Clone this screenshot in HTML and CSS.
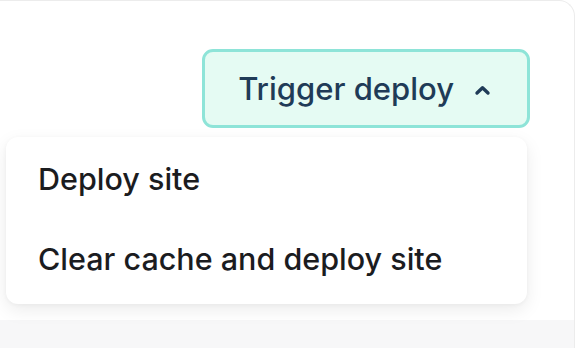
FILE: index.html
```html
<!DOCTYPE html>
<html lang="en">

<head>
    <meta charset="UTF-8">
    <meta name="viewport" content="width=device-width, initial-scale=1.0">
    <title>Trigger deploy</title>
    <link rel="stylesheet" href="styles.css">
</head>

<body>
    <div class="card">
        <div class="card-header">
            <div class="deploy-menu">
                <button type="button" class="btn-trigger">
                    <span>Trigger deploy</span>
                    <svg class="chevron" width="17" height="12" viewBox="0 0 17 12" aria-hidden="true">
                        <path d="M3 9 L8.5 3.8 L14 9" fill="none" stroke="currentColor" stroke-width="3.4" stroke-linecap="round" stroke-linejoin="round"/>
                    </svg>
                </button>
                <ul class="dropdown">
                    <li class="dropdown-item">Deploy site</li>
                    <li class="dropdown-item">Clear cache and deploy site</li>
                </ul>
            </div>
        </div>
        <div class="card-footer"></div>
    </div>
</body>

</html>
```

FILE: styles.css
```css
body {
    margin: 0;
    background-color: #fff;
    font-family: Inter, "Noto Sans", Arial, sans-serif;
    overflow: hidden;
}

.card {
    width: 593px;
    margin-left: -20px;
    border: 1px solid #ececec;
    border-bottom: 0;
    border-radius: 0 16px 0 0;
    background-color: #fff;
}

.card-header {
    display: flex;
    justify-content: flex-end;
    height: 319px;
    padding: 48px 44px 0 0;
    box-sizing: border-box;
}

.card-footer {
    height: 40px;
    background-color: #f7f7f8;
}

.deploy-menu {
    position: relative;
    height: 79px;
}

.btn-trigger {
    display: flex;
    align-items: center;
    gap: 20px;
    height: 79px;
    padding: 0 36px 0 33px;
    border: 3px solid #8ee4d8;
    border-radius: 11px;
    background-color: #e5fbf3;
    color: #1f3b57;
    font-family: inherit;
    font-size: 31px;
    font-weight: 500;
    cursor: pointer;
}

.chevron {
    display: block;
    margin-top: 3px;
}

.dropdown {
    position: absolute;
    top: 88px;
    right: 3px;
    width: 521px;
    margin: 0;
    padding: 1px 0 6px;
    list-style: none;
    background-color: #fff;
    border-radius: 12px;
    box-shadow: 0 6px 18px rgba(0, 0, 0, 0.08), 0 1px 4px rgba(0, 0, 0, 0.04);
}

.dropdown-item {
    display: flex;
    align-items: center;
    height: 80px;
    padding-left: 32px;
    color: #1b1c1f;
    font-size: 30.5px;
    font-weight: 500;
}
```
